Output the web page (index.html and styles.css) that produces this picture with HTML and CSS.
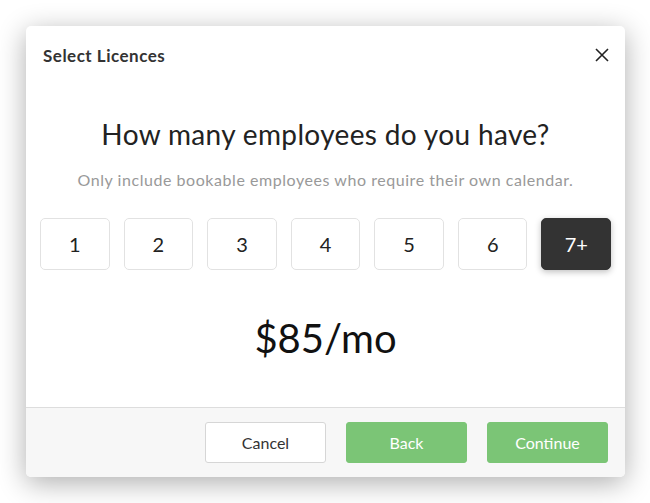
FILE: index.html
```html
<!DOCTYPE html>
<html>
<head>
<meta charset="utf-8">
<link rel="stylesheet" href="styles.css">
</head>
<body>
<div class="modal">
  <div class="modal-header">
    <span class="modal-title">Select Licences</span>
    <button class="close" aria-label="Close">
      <svg width="14" height="14" viewBox="0 0 14 14"><path d="M1 1L13 13M13 1L1 13" stroke="#222" stroke-width="1.6" fill="none"/></svg>
    </button>
  </div>
  <div class="modal-body">
    <h2 class="question">How many employees do you have?</h2>
    <p class="hint">Only include bookable employees who require their own calendar.</p>
    <div class="choices">
      <button class="choice">1</button>
      <button class="choice">2</button>
      <button class="choice">3</button>
      <button class="choice">4</button>
      <button class="choice">5</button>
      <button class="choice">6</button>
      <button class="choice active">7+</button>
    </div>
    <div class="price">$85/mo</div>
  </div>
  <div class="modal-footer">
    <button class="btn btn-default">Cancel</button>
    <button class="btn btn-green">Back</button>
    <button class="btn btn-green">Continue</button>
  </div>
</div>
</body>
</html>
```
FILE: styles.css
```css
html, body {
  margin: 0;
  padding: 0;
  background: #ffffff;
}
body {
  font-family: "Lato", "Liberation Sans", sans-serif;
  color: #333;
  padding: 26px 25px 26px 26px;
}
.modal {
  width: 599px;
  height: 451px;
  background: #fff;
  border-radius: 5px;
  box-shadow: 0 6px 28px rgba(0,0,0,0.32);
  display: flex;
  flex-direction: column;
  overflow: hidden;
}
.modal-header {
  display: flex;
  justify-content: space-between;
  align-items: center;
  padding: 19px 16px 0 17px;
  height: 20px;
}
.modal-title {
  font-size: 17px;
  font-weight: 700;
  letter-spacing: 0.5px;
  color: #333;
}
.close {
  border: 0;
  background: none;
  padding: 0;
  width: 14px;
  height: 14px;
  display: flex;
  cursor: pointer;
}
.modal-body {
  flex: 1;
  display: flex;
  flex-direction: column;
  align-items: center;
  padding: 0 14px;
}
.question {
  margin: 52px 0 0;
  font-size: 28px;
  font-weight: 400;
  line-height: 34px;
  letter-spacing: 0.35px;
  color: #222;
}
.hint {
  margin: 19px 0 0;
  font-size: 16px;
  line-height: 20px;
  letter-spacing: 0.55px;
  color: #999;
}
.choices {
  display: flex;
  gap: 14px;
  margin-top: 28px;
  width: 100%;
}
.choice {
  flex: 1;
  height: 52px;
  border: 1px solid #e2e2e2;
  border-radius: 5px;
  background: #fff;
  font-family: inherit;
  font-size: 20px;
  color: #222;
  padding: 0;
}
.choice.active {
  background: #333;
  border-color: #333;
  color: #fff;
  box-shadow: 0 2px 6px rgba(0,0,0,0.25);
}
.price {
  margin-top: 44px;
  font-size: 40px;
  line-height: 48px;
  color: #111;
}
.modal-footer {
  height: 69px;
  border-top: 1px solid #dddddd;
  background: #f7f7f7;
  display: flex;
  align-items: center;
  justify-content: flex-end;
  gap: 20px;
  padding: 0 17px 0 0;
}
.btn {
  width: 121px;
  height: 41px;
  border-radius: 3px;
  font-family: inherit;
  font-size: 16px;
  padding: 0;
}
.btn-default {
  background: #fff;
  border: 1px solid #d6d6d6;
  color: #333;
}
.btn-green {
  background: #7bc576;
  border: 1px solid #7bc576;
  color: #fff;
}
```
